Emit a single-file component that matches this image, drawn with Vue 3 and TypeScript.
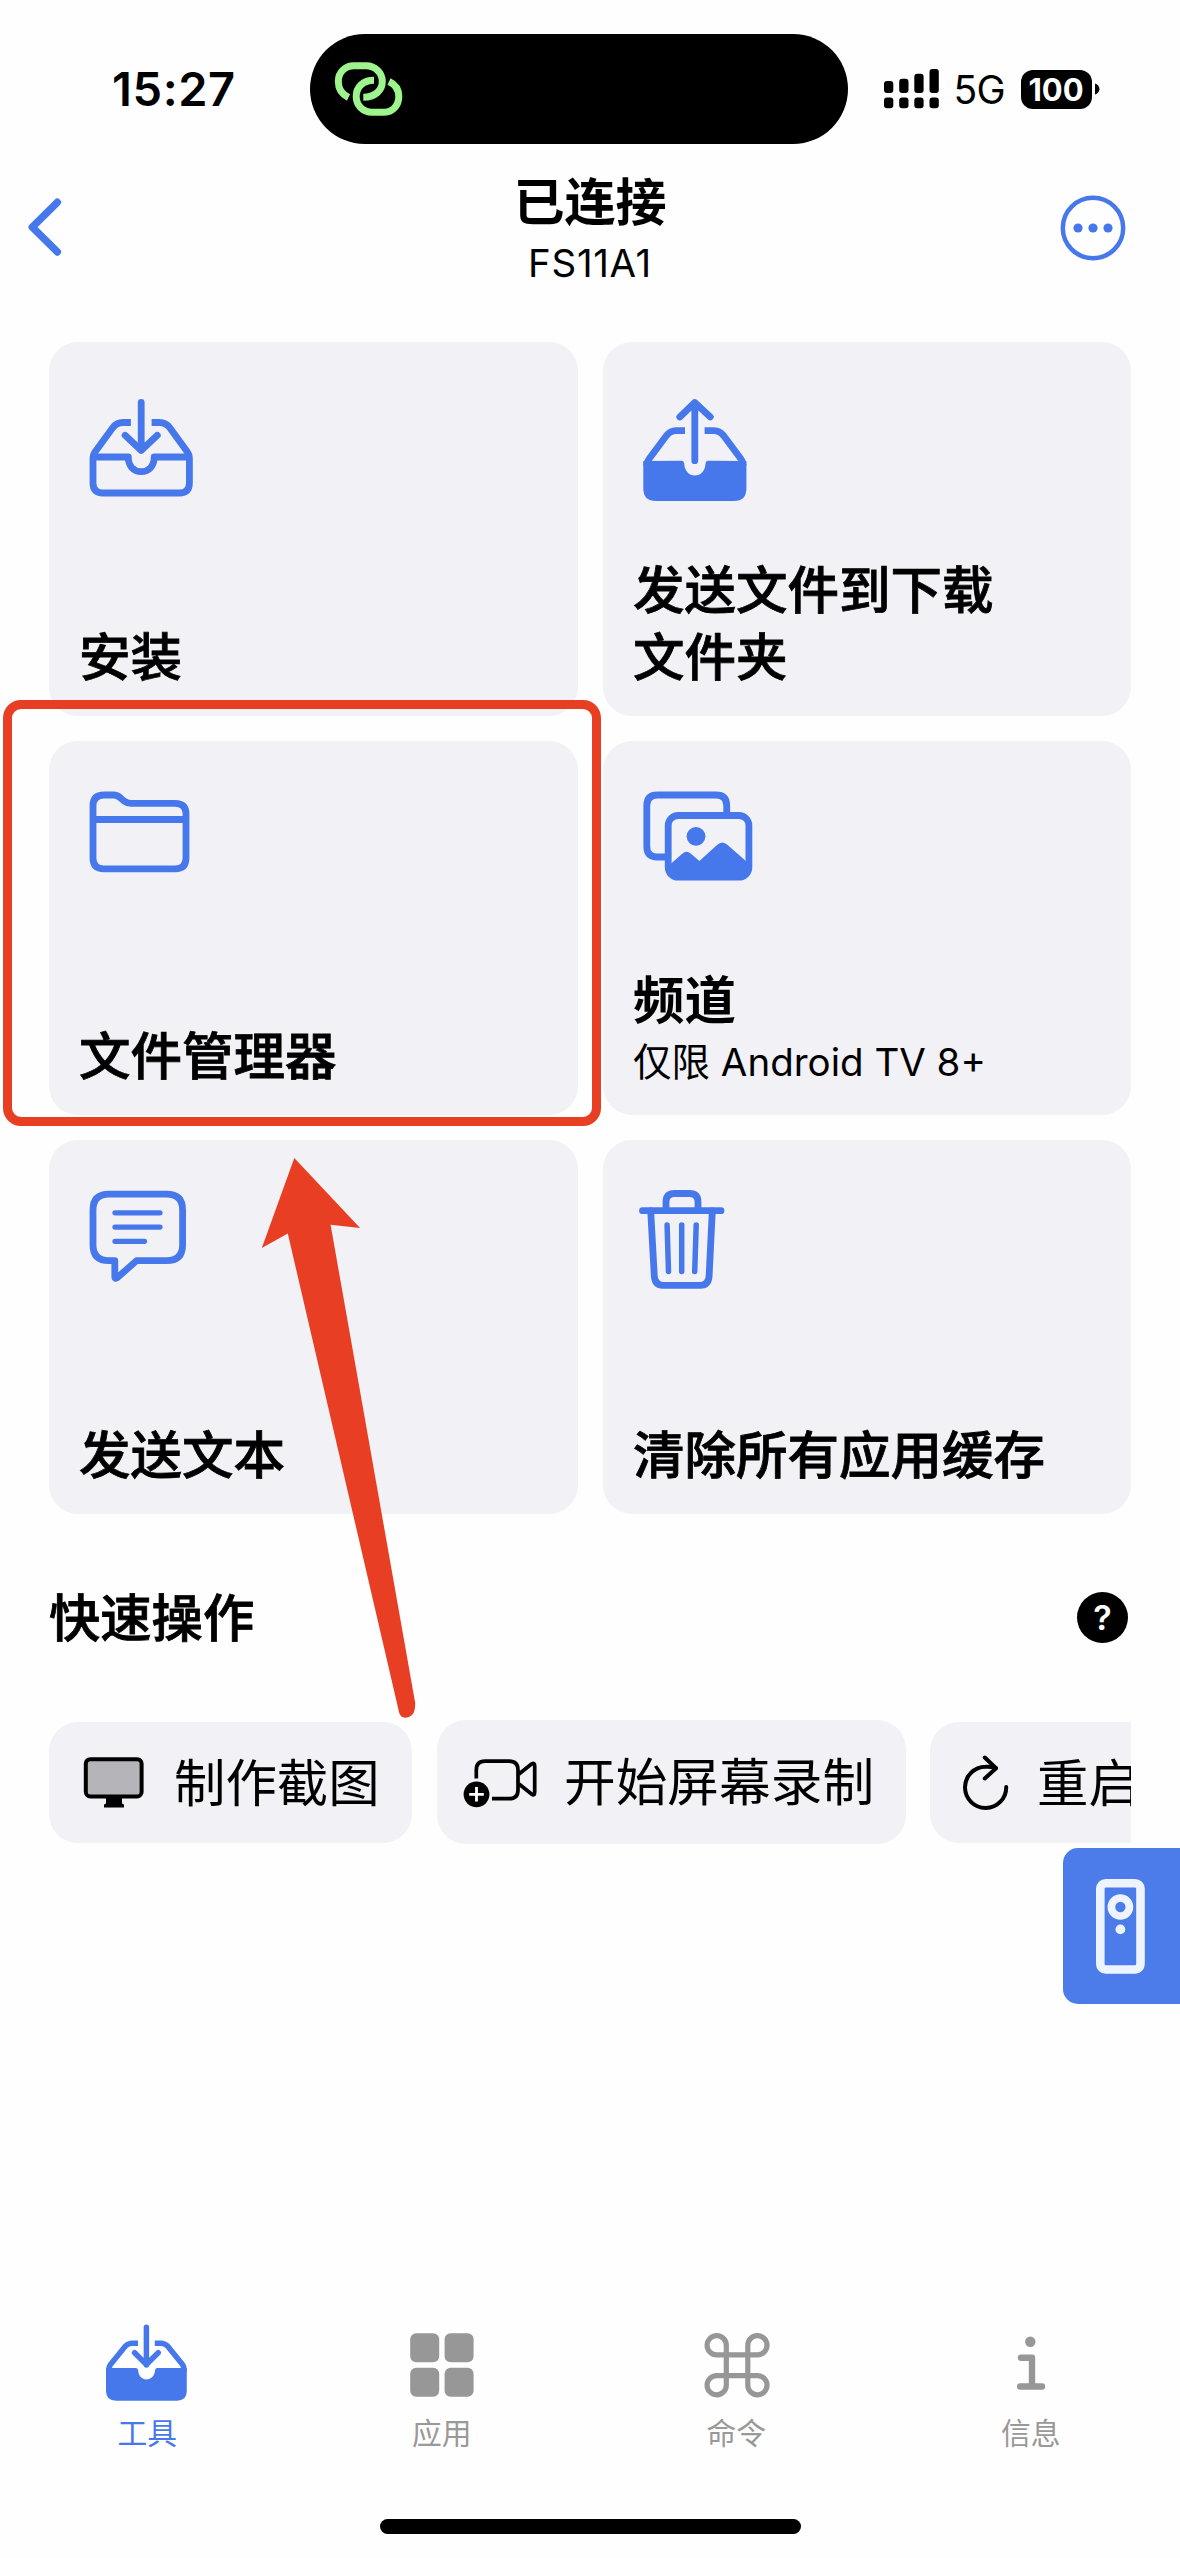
<script setup lang="ts">
interface Card {
  icon: 'install' | 'send' | 'folder' | 'gallery' | 'chat' | 'trash'
  lines: string[]
  note?: string
  heavy?: boolean
}

interface Tab {
  icon: 'tray' | 'grid' | 'command' | 'info'
  label: string
  active?: boolean
}

const cards: Card[] = [
  { icon: 'install', lines: ['安装'] },
  { icon: 'send', lines: ['发送文件到下载', '文件夹'] },
  { icon: 'folder', lines: ['文件管理器'] },
  { icon: 'gallery', lines: ['频道'], note: '仅限 Android TV 8+', heavy: true },
  { icon: 'chat', lines: ['发送文本'] },
  { icon: 'trash', lines: ['清除所有应用缓存'] },
]

const tabs: Tab[] = [
  { icon: 'tray', label: '工具', active: true },
  { icon: 'grid', label: '应用' },
  { icon: 'command', label: '命令' },
  { icon: 'info', label: '信息' },
]

const signalBars = [
  { x: 0, top: 12 },
  { x: 15.2, top: 9.7 },
  { x: 30.3, top: 4.8 },
  { x: 45.5, top: 0 },
]
</script>

<template>
  <div class="screen">
    <header class="status">
      <span class="time">15:27</span>
      <div class="island">
        <svg class="link" viewBox="334 61 70 56" fill="none" stroke="#9ff58d" stroke-width="7">
          <path d="M348.500 97.500C341.500 94 338.300 88 338.300 81.500C338.300 72 345.500 65.800 354 65.800H366C375.500 65.800 382.300 73 382.300 81.500C382.300 90.500 375 97.200 363.300 97.200" />
          <path d="M374 80.300C363 80.300 356.200 87 356.200 96.500C356.200 105.500 363 112.200 372 112.200H384.500C393 112.200 398.800 105 398.800 96.500C398.800 90 395.500 84.500 389 81.500" />
        </svg>
      </div>
      <svg class="signal" viewBox="0 0 55 40">
        <g v-for="bar in signalBars" :key="bar.x">
          <rect :x="bar.x" :y="bar.top" width="9.300" :height="24 - bar.top" rx="3" />
          <rect :x="bar.x" y="28.500" width="9.300" height="10.800" rx="3" />
        </g>
      </svg>
      <span class="network">5G</span>
      <span class="battery">100</span>
      <svg class="nub" viewBox="0 0 5 12"><path d="M0 0.500C2.500 1 4.500 3.500 4.500 6S2.500 11 0 11.500Z" /></svg>
    </header>

    <nav class="nav">
      <div class="side">
        <svg class="back" viewBox="28 198 34 58" fill="none" stroke="#4778eb" stroke-width="7.500" stroke-linecap="round" stroke-linejoin="round">
          <path d="M57.300 202.300L32.300 227.200L57.300 251.900" />
        </svg>
      </div>
      <div class="heading">
        <div class="title">已连接</div>
        <div class="device">FS11A1</div>
      </div>
      <div class="side end">
        <svg class="more" viewBox="0 0 66 66" fill="#4778eb">
          <circle cx="33" cy="33" r="30.200" fill="none" stroke="#4778eb" stroke-width="4.500" />
          <circle cx="18" cy="33" r="4.600" />
          <circle cx="33" cy="33" r="4.600" />
          <circle cx="48" cy="33" r="4.600" />
        </svg>
      </div>
    </nav>

    <main class="content">
      <section class="cards">
        <article v-for="card in cards" :key="card.icon" class="card">
          <svg class="card-icon" viewBox="30 40 130 130" fill="none" stroke="#4778eb" stroke-width="6.800" stroke-linecap="round" stroke-linejoin="round">
            <template v-if="card.icon === 'install'">
              <path d="M92.200 60.500V108M76.100 93.300L92.200 108.500L108.300 93.300" />
              <path stroke-linecap="butt" d="M81.900 80.500H74Q67.500 80.500 63.500 86L46 110Q44 113 44 116V141Q44 151 54 151H130.400Q140.400 151 140.400 141V116Q140.400 113 138.400 110L121 86Q117 80.500 110.500 80.500H102.600" />
              <path stroke-linecap="butt" d="M44 115H79.300C79.300 124 84.500 129.700 92.200 129.700S105.200 124 105.200 115H140.400" />
            </template>
            <template v-else-if="card.icon === 'send'">
              <path d="M91.800 61V118.700M76.800 75L91.800 60.500L107.300 75" />
              <path stroke-linecap="butt" d="M43.800 124V122Q44 119.500 46 117L63.500 93.500Q67.500 88.600 73 88.600H82M101.600 88.600H111Q116.500 88.600 120.500 93.500L138 117Q140 119.500 140 122V124" />
              <path fill="#4778eb" stroke="none" d="M40.300 119L79 118.700Q81 118.800 81.200 121.500C81.500 129 86 133.500 91.900 133.500S102.200 129 102.500 121.500Q102.700 118.800 104.800 118.700L143.400 119V146.500Q143.400 159 131 159H53Q40.300 159 40.300 146.500Z" />
            </template>
            <template v-else-if="card.icon === 'folder'">
              <path d="M44 65Q44 54 55 54H64.500Q68.500 54 71.500 57L75 60Q78 62.300 82 62.300H126Q137 62.300 137 73V117Q137 127.800 126 127.800H55Q44 127.800 44 117ZM44 78.500H137" />
            </template>
            <template v-else-if="card.icon === 'gallery'">
              <path stroke-linecap="butt" d="M62 116H54.500Q43.800 116 43.800 105.500V64.500Q43.800 54 54.500 54H113Q123.700 54 123.700 64.500V72" />
              <rect x="65.200" y="74.500" width="80.700" height="61.700" rx="10" />
              <circle cx="93" cy="95.300" r="9.400" fill="#4778eb" stroke="none" />
              <path fill="#4778eb" stroke="none" d="M67 123.500L79.500 112.500Q83.600 109 87.700 112.500L96.400 120L114 104Q119.300 99 124.600 104L144 121V136H67Z" />
            </template>
            <template v-else-if="card.icon === 'chat'">
              <path d="M60 54.200H117.500Q133.600 54.200 133.600 70V105Q133.600 120.700 117.500 120.700H87.500L68.500 137.500Q65.800 139.500 65.800 136.500V120.700H60Q44 120.700 44 105V70Q44 54.200 60 54.200Z" />
              <path stroke-width="5.300" d="M66 72.800H111M66 87.100H111M66 101.300H95.500" />
            </template>
            <template v-else>
              <path d="M39.500 70.700H118M63 70V62Q63 53.500 71.500 53.500H86.500Q95 53.500 95 62V70" />
              <path d="M47.700 71L51.300 136Q52 145.300 60 145.300H97.500Q105.500 145.300 106.100 136L109.300 71" />
              <path stroke-width="5.500" d="M64.100 85L65.500 131.500M78.700 85V131.500M93.200 85L91.700 131.500" />
            </template>
          </svg>
          <div class="card-text">
            <div v-for="line in card.lines" :key="line" class="card-title" :class="{ heavy: card.heavy }">{{ line }}</div>
            <div v-if="card.note" class="card-note">{{ card.note }}</div>
          </div>
        </article>
      </section>

      <section class="quick-head">
        <h2>快速操作</h2>
        <span class="help">?</span>
      </section>

      <section class="chips">
        <div class="chip shot">
          <svg class="chip-icon" viewBox="83 1757 62 53">
            <rect x="85.800" y="1760.200" width="55.800" height="37.200" rx="4.500" fill="#b5b4b9" stroke="#000" stroke-width="4" />
            <path d="M106 1798H122V1804Q122 1805 124 1805.500V1808.500H104V1805.500Q106 1805 106 1804Z" />
          </svg>
          <span>制作截图</span>
        </div>
        <div class="chip record">
          <svg class="chip-icon" viewBox="463 1757 75 53" fill="none" stroke="#000" stroke-width="3.700" stroke-linejoin="round">
            <path d="M476.300 1779.500V1771Q476.300 1762.200 485 1762.200H509Q518 1762.200 518 1771V1791Q518 1799.700 509 1799.700H492" />
            <path d="M519 1775L531.500 1765Q534.700 1763 534.700 1767V1793Q534.700 1797.500 531.500 1795L519 1785" />
            <circle cx="476.500" cy="1795.300" r="12.900" fill="#000" stroke="none" />
            <path stroke="#fff" stroke-width="2.800" d="M476.500 1788V1802.600M469.200 1795.300H483.800" />
          </svg>
          <span>开始屏幕录制</span>
        </div>
        <div class="chip restart">
          <svg class="chip-icon" viewBox="962 1753 48 56" fill="none" stroke="#000" stroke-width="4" stroke-linecap="round" stroke-linejoin="round">
            <path d="M1006.200 1786A20.600 20.600 0 1 1 985.500 1765.800Q991 1765.500 996 1767.200" />
            <path d="M984.800 1756.500L996 1767.200L984.800 1777.500" />
          </svg>
          <span>重启</span>
        </div>
      </section>
    </main>

    <aside class="remote">
      <svg viewBox="0 0 49 95" fill="none" stroke="#edf4fd">
        <rect x="4.300" y="4.300" width="40.200" height="86.200" rx="5.500" stroke-width="8.600" />
        <circle cx="24.400" cy="28" r="9" stroke-width="7.700" />
        <circle cx="24.400" cy="50.400" r="4.900" fill="#edf4fd" stroke="none" />
      </svg>
    </aside>

    <footer class="tabbar">
      <div v-for="tab in tabs" :key="tab.label" class="tab" :class="{ active: tab.active }">
        <svg v-if="tab.icon === 'tray'" class="tab-icon" viewBox="102 2320 90 84" fill="none" stroke="#4778eb" stroke-width="5.500" stroke-linecap="round" stroke-linejoin="round">
          <path d="M146.400 2327.200V2365M134.600 2352.700L146.400 2364.500L158.200 2352.700" />
          <path stroke-linecap="butt" d="M108.800 2372V2369Q109 2367 110.500 2364.500L125.500 2346Q128.500 2343.200 132 2343.200H138M154.800 2343.200H161Q164.500 2343.200 167.500 2346L182.500 2364.500Q184 2367 184 2369V2372" />
          <path fill="#4778eb" stroke="none" d="M106 2368L136 2368Q138 2368 138.200 2370.500C138.500 2376 142 2379.500 146.400 2379.500S154.600 2376 155 2370.500Q155.200 2368 157 2368L186.800 2368V2391Q186.800 2400.700 177 2400.700H116Q106 2400.700 106 2391Z" />
        </svg>
        <svg v-else-if="tab.icon === 'grid'" class="tab-icon" viewBox="397 2320 90 84" fill="#979797">
          <rect x="410.200" y="2333.300" width="29" height="29" rx="6" />
          <rect x="444.600" y="2333.300" width="29" height="29" rx="6" />
          <rect x="410.200" y="2367.800" width="29" height="29" rx="6" />
          <rect x="444.600" y="2367.800" width="29" height="29" rx="6" />
        </svg>
        <svg v-else-if="tab.icon === 'command'" class="tab-icon" viewBox="692 2320 90 84" fill="none" stroke="#979797" stroke-width="5.200">
          <path d="M727.300 2354.900V2345.500A9.600 9.600 0 1 0 717.800 2354.900H758.400A9.600 9.600 0 1 0 748.800 2345.500V2385A9.600 9.600 0 1 0 758.400 2375.600H717.800A9.600 9.600 0 1 0 727.300 2385Z" />
        </svg>
        <svg v-else class="tab-icon" viewBox="987 2320 90 84" fill="none" stroke="#979797" stroke-width="6.400" stroke-linecap="round" stroke-linejoin="round">
          <circle cx="1031.300" cy="2341.700" r="5.200" fill="#979797" stroke="none" />
          <path d="M1022 2357.700H1033V2386M1021.200 2386.500H1043" />
        </svg>
        <span>{{ tab.label }}</span>
      </div>
    </footer>
    <div class="home" />

    <div class="highlight" />
    <svg class="pointer" viewBox="260 1156 158 564" fill="#e83f24">
      <path d="M294.300 1158L360.100 1228L330.600 1224.800L415.200 1703Q415.500 1715 409 1717Q400.500 1719.500 399 1712L287.800 1233.500L261.800 1248.100Z" />
    </svg>
  </div>
</template>

<style>
body {
  margin: 0;
  background: #fefefe;
}
</style>

<style scoped>
.screen {
  position: relative;
  display: flex;
  flex-direction: column;
  width: 1180px;
  height: 2558px;
  overflow: hidden;
  background: #fefefe;
  color: #000;
  font-family: Inter, "Noto Sans CJK SC", sans-serif;
}

svg {
  display: block;
  flex: none;
}

.status {
  display: flex;
  align-items: center;
  height: 110px;
  padding-top: 34px;
}

.time {
  flex: none;
  width: 198px;
  padding: 0 0 2px 112px;
  font-size: 47px;
  font-weight: 600;
  letter-spacing: 0.6px;
}

.island {
  display: flex;
  align-items: center;
  flex: none;
  width: 538px;
  height: 110px;
  border-radius: 55px;
  background: #000;
}

.link {
  width: 70px;
  height: 56px;
  margin-left: 24px;
}

.signal {
  width: 55px;
  height: 40px;
  margin-left: 36px;
}

.network {
  width: 67px;
  padding-left: 14.5px;
  box-sizing: border-box;
  font-size: 39px;
  letter-spacing: -0.8px;
}

.battery {
  width: 71px;
  height: 39px;
  margin-left: 14.5px;
  border-radius: 12px;
  background: #000;
  color: #fff;
  font-size: 31px;
  font-weight: 700;
  line-height: 39px;
  text-align: center;
}

.nub {
  width: 5px;
  height: 12px;
  margin-left: 3px;
}

.nav {
  display: flex;
  height: 198px;
}

.side {
  display: flex;
  width: 180px;
  padding: 54px 0 0 28px;
  box-sizing: border-box;
}

.side.end {
  justify-content: flex-end;
  padding: 51px 54px 0 0;
}

.back {
  width: 34px;
  height: 58px;
}

.more {
  width: 66px;
  height: 66px;
}

.heading {
  flex: 1;
  padding-top: 29px;
  text-align: center;
}

.title {
  font-size: 51px;
  font-weight: 600;
  line-height: 60px;
}

.device {
  margin-top: 5px;
  font-size: 38.5px;
  letter-spacing: 0.7px;
  line-height: 50px;
}

.content {
  padding: 0 49px;
}

.cards {
  display: grid;
  grid-template-columns: 529px 528px;
  grid-auto-rows: 374px;
  column-gap: 25px;
  row-gap: 25.2px;
}

.card {
  display: flex;
  flex-direction: column;
  justify-content: space-between;
  padding: 40px 30px 25px;
  box-sizing: border-box;
  border-radius: 29px;
  background: #f1f1f6;
}

.card-icon {
  width: 130px;
  height: 130px;
}

.card-title {
  font-size: 51.5px;
  font-weight: 500;
  line-height: 67px;
  white-space: nowrap;
  -webkit-text-stroke: 0.8px #000;
}

.card-title.heavy {
  font-weight: 700;
  -webkit-text-stroke: 0;
}

.card-note {
  font-size: 38.5px;
  line-height: 56px;
  white-space: nowrap;
}

.quick-head {
  display: flex;
  align-items: center;
  justify-content: space-between;
  height: 70px;
  margin-top: 68px;
  padding-right: 3px;
}

h2 {
  margin: 0;
  padding-top: 2px;
  font-size: 51.3px;
  font-weight: 500;
  line-height: 70px;
  -webkit-text-stroke: 0.8px #000;
}

.help {
  width: 51px;
  height: 51px;
  border-radius: 50%;
  background: #000;
  color: #fff;
  font-size: 34px;
  font-weight: 600;
  line-height: 52px;
  text-align: center;
}

.chips {
  display: flex;
  align-items: center;
  height: 126px;
  margin-top: 67px;
  overflow: hidden;
}

.chip {
  display: flex;
  align-items: center;
  flex: none;
  height: 121px;
  box-sizing: border-box;
  border-radius: 29px;
  background: #f1f1f6;
  font-size: 51.4px;
  line-height: 70px;
  white-space: nowrap;
}

.chip-icon {
  height: 53px;
}

.shot {
  width: 363px;
  padding-left: 34px;
}

.shot .chip-icon {
  width: 62px;
  margin-right: 29px;
}

.shot span,
.restart span {
  padding-top: 2px;
}

.record {
  width: 469px;
  height: 124px;
  margin-left: 25px;
  padding-left: 26px;
  font-size: 51.7px;
}

.record .chip-icon {
  width: 75px;
  margin-right: 26px;
}

.restart {
  width: 360px;
  margin-left: 24px;
  padding-left: 32px;
}

.restart .chip-icon {
  width: 48px;
  height: 56px;
  margin-right: 27px;
}

.remote {
  display: flex;
  align-items: center;
  align-self: flex-end;
  width: 117px;
  height: 156px;
  margin-top: 3px;
  padding-left: 33px;
  box-sizing: border-box;
  border-radius: 15px 0 0 15px;
  background: #4c7ce9;
}

.remote svg {
  width: 49px;
  height: 95px;
}

.tabbar {
  display: flex;
  width: 1178px;
  margin-top: auto;
  padding-bottom: 66px;
}

.tab {
  display: flex;
  flex: 1;
  flex-direction: column;
  align-items: center;
  color: #999;
  font-size: 29.8px;
  line-height: 40px;
}

.tab.active {
  color: #4778eb;
}

.tab-icon {
  width: 90px;
  height: 84px;
  margin-bottom: 9px;
}

.home {
  align-self: center;
  width: 421px;
  height: 15px;
  margin-bottom: 24.5px;
  border-radius: 8px;
  background: #000;
}

/* Callout drawn over the file manager card */
.highlight {
  position: absolute;
  top: 700px;
  left: 2.5px;
  width: 598.5px;
  height: 425.5px;
  box-sizing: border-box;
  border: 9.5px solid #e83f24;
  border-radius: 18px;
}

.pointer {
  position: absolute;
  top: 1156px;
  left: 260px;
  width: 158px;
  height: 564px;
}
</style>
